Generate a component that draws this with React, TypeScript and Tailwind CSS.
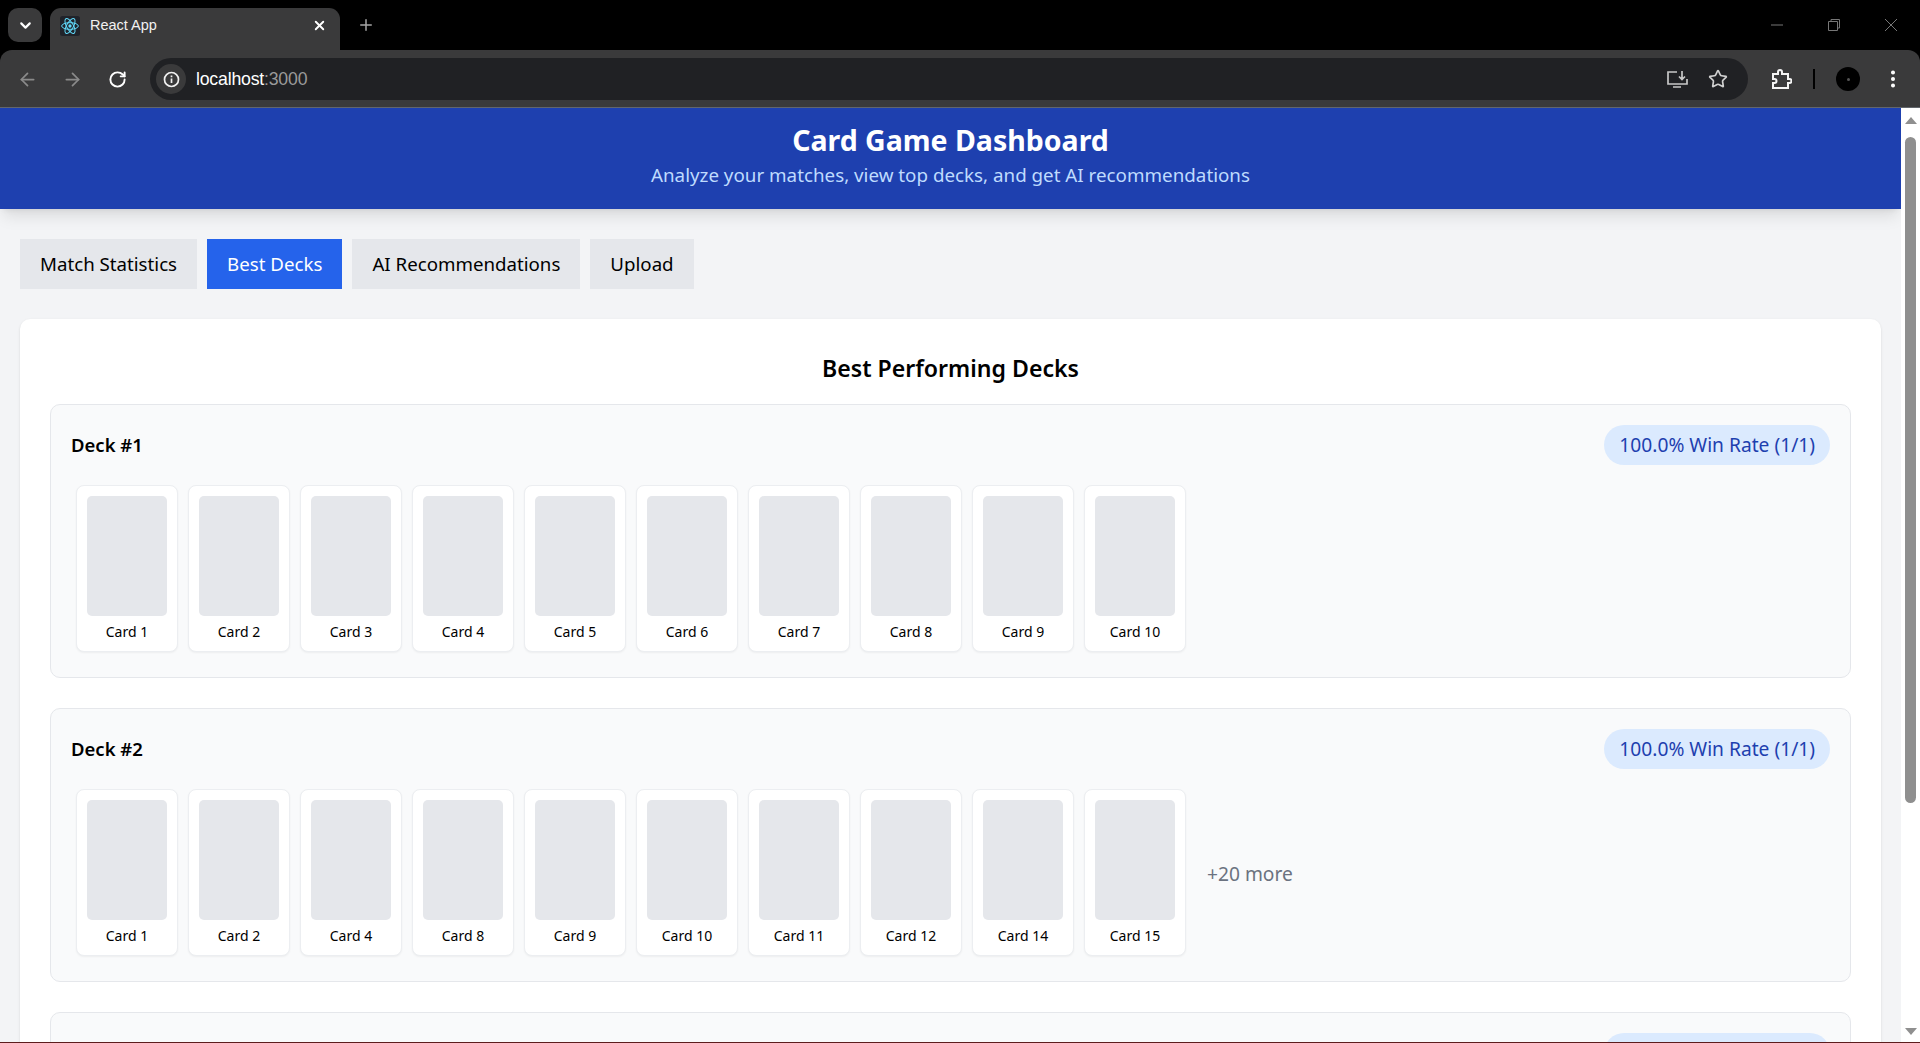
import React from 'react';
import { ArrowLeft, ArrowRight, ChevronDown, EllipsisVertical, Plus, RotateCw, Star, X } from 'lucide-react';

type Deck = {
  name: string;
  cards: number[];
  more?: number;
};

const decks: Deck[] = [
  { name: 'Deck #1', cards: [1, 2, 3, 4, 5, 6, 7, 8, 9, 10] },
  { name: 'Deck #2', cards: [1, 2, 4, 8, 9, 10, 11, 12, 14, 15], more: 20 },
  { name: 'Deck #3', cards: [1, 2, 3, 4, 5, 6, 7, 8, 9, 10] },
];

const tabs = ['Match Statistics', 'Best Decks', 'AI Recommendations', 'Upload'];

const ReactLogo = () => (
  <svg width="20" height="20" viewBox="-12 -12 24 24" fill="none" stroke="#61dafb" strokeWidth="1.2">
    <rect x="-12" y="-12" width="24" height="24" rx="3" fill="#20232a" stroke="none" />
    <circle r="2" fill="#61dafb" stroke="none" />
    <ellipse rx="10" ry="4" />
    <ellipse rx="10" ry="4" transform="rotate(60)" />
    <ellipse rx="10" ry="4" transform="rotate(120)" />
  </svg>
);

const BrowserChrome = () => (
  <div className="shrink-0 bg-black font-['Liberation_Sans',sans-serif]">
    <div className="flex h-[50px] items-end pl-2">
      <div className="mb-2 flex h-[34px] w-[34px] items-center justify-center rounded-[10px] bg-[#3a3a3b] text-white">
        <ChevronDown size={17} strokeWidth={3} />
      </div>
      <div className="ml-2 flex h-[42px] w-[290px] items-center rounded-t-[11px] bg-[#3a3a3b] pb-[7px] pl-[10px] pr-[13px] text-white">
        <ReactLogo />
        <span className="ml-[10px] flex-1 text-[14.5px] text-[#f1f1f1]">React App</span>
        <X size={15} strokeWidth={3} />
      </div>
      <div className="mb-2 ml-[9px] flex h-[34px] w-[34px] items-center justify-center text-[#a5a5a5]">
        <Plus size={18} strokeWidth={2} />
      </div>
      <div className="mb-[18px] ml-auto flex items-center text-[#777]">
        <svg width="14" height="14" viewBox="0 0 14 14" className="mr-[43px]" stroke="currentColor" fill="none">
          <path d="M1 7h12" />
        </svg>
        <svg width="14" height="14" viewBox="0 0 14 14" className="mr-[43px]" stroke="currentColor" fill="none">
          <path d="M1.5 3.5h9v9h-9z M4 3.500V1.500h8.500V10h-2" />
        </svg>
        <svg width="14" height="14" viewBox="0 0 14 14" className="mr-[22px]" stroke="currentColor" fill="none">
          <path d="M1 1l12 12M13 1L1 13" />
        </svg>
      </div>
    </div>
    <div className="flex h-[58px] items-center rounded-t-[12px] border-b border-[#62666c] bg-[#3a3a3b] pl-4 pt-px">
      <ArrowLeft size={21} strokeWidth={2} className="ml-[1px] text-[#8a8a8a]" />
      <ArrowRight size={21} strokeWidth={2} className="ml-[24px] text-[#8a8a8a]" />
      <RotateCw size={19} strokeWidth={2.4} className="ml-[25px] text-white" />
      <div className="ml-[23px] flex h-[42px] w-[1598px] items-center rounded-full bg-[#202124] pl-[6px] pr-[17px]">
        <div className="flex h-[30px] w-[30px] items-center justify-center rounded-full bg-[#3a3a3b]">
          <svg width="17" height="17" viewBox="0 0 17 17" fill="none" stroke="#f1f1f1" strokeWidth="1.7">
            <circle cx="8.500" cy="8.500" r="7" />
            <path d="M8.500 7.500v4.500M8.500 4.500v1.700" />
          </svg>
        </div>
        <span className="ml-[10px] flex-1 text-[17.7px] tracking-[-0.2px] text-white">
          localhost<span className="text-[#9a9a9a]">:3000</span>
        </span>
        <svg width="22" height="20" viewBox="0 0 22 20" fill="none" stroke="#c7c7c7" strokeWidth="1.7" className="mr-[20px]">
          <path d="M11 3H2v12h19v-5M7 18h8M16 2v8M13 7.500l3 3 3-3" />
        </svg>
        <Star size={20} strokeWidth={2} className="mr-[3px] text-[#d0d0d0]" />
      </div>
      <svg width="22" height="22" viewBox="0 0 22 22" fill="none" stroke="#f4f4f4" strokeWidth="2" className="ml-[22px]">
        <path d="M3 6h5V4a2 2 0 0 1 4 0v2h6v5h1.500a1.500 1.500 0 0 1 0 4H18v5H3v-5h1.500a2 2 0 0 0 0-4H3z" />
      </svg>
      <div className="ml-[21px] h-5 w-[2px] bg-black" />
      <div className="ml-[21px] flex h-6 w-6 items-center justify-center rounded-full bg-black">
        <div className="h-[3px] w-[3px] rounded-full bg-[#555]" />
      </div>
      <EllipsisVertical size={22} strokeWidth={2.4} className="ml-[22px] text-white" />
    </div>
  </div>
);

const Scrollbar = () => (
  <div className="flex w-[19px] shrink-0 flex-col items-center bg-white">
    <div className="mt-[9px] h-0 w-0 border-x-[6px] border-b-[7px] border-x-transparent border-b-[#8f8f8f]" />
    <div className="mt-[13px] h-[666px] w-[11px] rounded-full bg-[#8f8f8f]" />
    <div className="mt-auto mb-[7px] h-0 w-0 border-x-[6px] border-t-[7px] border-x-transparent border-t-[#8f8f8f]" />
  </div>
);

const CardTile = ({ id }: { id: number }) => (
  <div className="w-[102px] rounded-lg border border-[#eceef1] bg-white px-[10px] pb-[10px] pt-[10px] shadow-[0_1px_2px_rgba(0,0,0,0.05)]">
    <div className="h-[120px] w-[80px] rounded-[5px] bg-[#e5e7eb]" />
    <div className="mt-[6px] text-center text-[14px] leading-[19px] text-black">Card {id}</div>
  </div>
);

const DeckRow = ({ deck }: { deck: Deck }) => (
  <div className="rounded-[10px] border border-[#e5e7eb] bg-[#f9fafb] p-5">
    <div className="flex items-center justify-between">
      <h3 className="text-[18.5px] font-semibold leading-[40px] text-black">{deck.name}</h3>
      <span className="rounded-full bg-[#dbeafe] px-[15px] text-[19.2px] leading-[40px] text-[#1e40af]">
        100.0% Win Rate (1/1)
      </span>
    </div>
    <div className="mt-5 flex items-center gap-[10px] px-[5px] pb-[5px]">
      {deck.cards.map((id) => (
        <CardTile key={id} id={id} />
      ))}
      {deck.more ? <span className="ml-[11px] mt-[4px] text-[19.2px] text-[#6b7280]">+{deck.more} more</span> : null}
    </div>
  </div>
);

export default function App() {
  return (
    <div className="flex h-[1043px] flex-col overflow-hidden bg-black font-['Noto_Sans',sans-serif]">
      <BrowserChrome />
      <div className="flex min-h-0 flex-1">
        <div className="min-w-0 flex-1 overflow-hidden bg-[#f3f4f6]">
          <header className="h-[101px] bg-[#1e40af] pt-[10px] text-center shadow-lg">
            <h1 className="text-[28.5px] font-bold leading-[44px] text-white">Card Game Dashboard</h1>
            <p className="text-[18.8px] leading-[26px] text-[#bfdbfe]">
              Analyze your matches, view top decks, and get AI recommendations
            </p>
          </header>
          <nav className="mt-[30px] flex gap-[10px] px-5">
            {tabs.map((tab) => (
              <button
                key={tab}
                className={
                  tab === 'Best Decks'
                    ? 'h-[50px] bg-[#2563eb] px-5 text-[18.7px] text-white'
                    : 'h-[50px] bg-[#e5e7eb] px-5 text-[18.7px] text-black'
                }
              >
                {tab}
              </button>
            ))}
          </nav>
          <main className="mx-5 mt-[30px] rounded-[10px] bg-white px-[30px] pb-[30px] pt-[29px] shadow-sm">
            <h2 className="mb-[16px] text-center text-[23.1px] font-semibold leading-[40px] text-black">
              Best Performing Decks
            </h2>
            <div className="flex flex-col gap-[30px]">
              {decks.map((deck) => (
                <DeckRow key={deck.name} deck={deck} />
              ))}
            </div>
          </main>
        </div>
        <Scrollbar />
      </div>
      <div className="h-px shrink-0 bg-[#5c1d1d]" />
    </div>
  );
}
